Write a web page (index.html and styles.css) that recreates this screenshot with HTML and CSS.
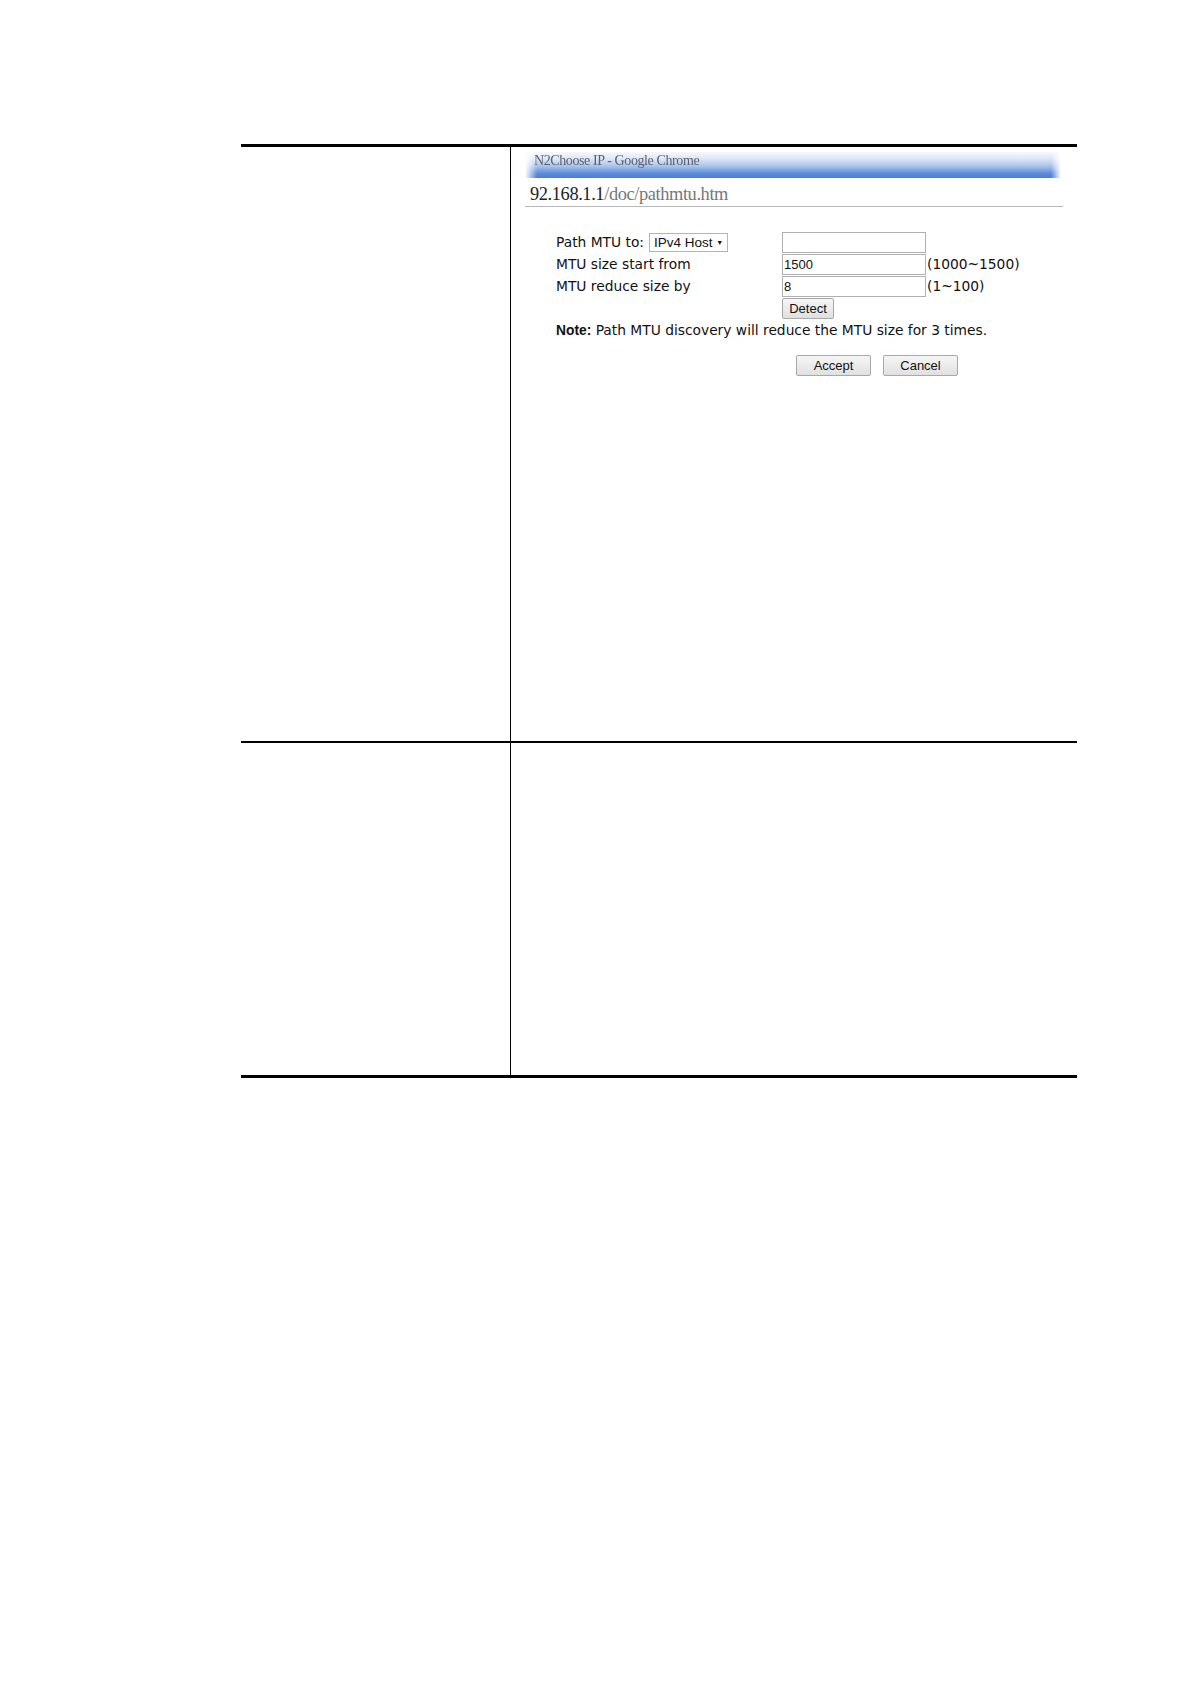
FILE: index.html
```html
<!DOCTYPE html>
<html>
<head>
<meta charset="utf-8">
<link rel="stylesheet" href="styles.css">
</head>
<body>
<div class="table">
  <div class="row row-top">
    <div class="cell-left"></div>
    <div class="cell-right">
      <div class="shot">
        <div class="titlebar"><span class="title">N2Choose IP - Google Chrome</span></div>
        <div class="urlbar"><div class="urltext"><span class="host">92.168.1.1</span><span class="path">/doc/pathmtu.htm</span></div></div>
        <div class="form">
          <div class="frow">
            <div class="flabel">Path MTU to: <span class="select">IPv4 Host <span class="arrow">&#9660;</span></span></div>
            <div class="input"></div>
          </div>
          <div class="frow">
            <div class="flabel">MTU size start from</div>
            <div class="input">1500</div>
            <div class="hint">(1000~1500)</div>
          </div>
          <div class="frow">
            <div class="flabel">MTU reduce size by</div>
            <div class="input">8</div>
            <div class="hint">(1~100)</div>
          </div>
          <div class="frow">
            <div class="flabel"></div>
            <div class="btn detect">Detect</div>
          </div>
          <div class="note"><b>Note:</b> Path MTU discovery will reduce the MTU size for 3 times.</div>
          <div class="actions">
            <div class="btn wide">Accept</div>
            <div class="btn wide">Cancel</div>
          </div>
        </div>
      </div>
    </div>
  </div>
  <div class="row row-bottom">
    <div class="cell-left"></div>
    <div class="cell-right"></div>
  </div>
</div>
</body>
</html>
```

FILE: styles.css
```css
html, body {
  margin: 0;
  padding: 0;
  background: #fff;
}
body {
  font-family: "DejaVu Sans", Tahoma, sans-serif;
  color: #111;
}
.table {
  margin-top: 144px;
  margin-left: 241px;
  width: 836px;
  border-top: 3px solid #000;
  border-bottom: 3px solid #000;
}
.row {
  display: flex;
}
.row-top {
  height: 594px;
  border-bottom: 2px solid #000;
}
.row-bottom {
  height: 332px;
}
.cell-left {
  width: 269px;
  flex: none;
}
.cell-right {
  flex: 1;
  border-left: 1px solid #000;
}
.shot {
  padding: 5px 0 0 14px;
}
.titlebar {
  width: 536px;
  height: 26px;
  overflow: hidden;
  background: linear-gradient(to bottom, #f5f8fd 0%, #dfe8f7 25%, #a8c2ec 55%, #5d8cdb 82%, #4b7dd4 100%);
  -webkit-mask-image: linear-gradient(to right, transparent 0, #000 12px, #000 calc(100% - 10px), transparent 100%);
  mask-image: linear-gradient(to right, transparent 0, #000 12px, #000 calc(100% - 10px), transparent 100%);
}
.title {
  display: block;
  padding: 2px 0 0 9px;
  font-family: "Liberation Serif", "DejaVu Serif", serif;
  font-size: 14px;
  line-height: 14px;
  color: #5a6070;
  letter-spacing: -0.4px;
  white-space: nowrap;
}
.urlbar {
  width: 538px;
  height: 28px;
  border-bottom: 1px solid #b8b8b8;
}
.urltext {
  margin-left: 5px;
  padding-top: 6px;
  white-space: nowrap;
  font-family: "Liberation Serif", "DejaVu Serif", serif;
  font-size: 18.4px;
  line-height: 20px;
  letter-spacing: -0.4px;
}
.host { color: #222; }
.path { color: #777; }
.form {
  padding: 24px 0 0 31px;
  font-size: 13.8px;
}
.frow {
  display: flex;
  align-items: center;
  height: 22px;
}
.flabel {
  width: 226px;
  flex: none;
  display: flex;
  align-items: center;
  gap: 5px;
  white-space: nowrap;
}
.select {
  display: inline-block;
  height: 17px;
  line-height: 17px;
  padding: 0 4px;
  border: 1px solid #b5b5b5;
  font-family: "Liberation Sans", Arial, sans-serif;
  font-size: 13.5px;
}
.arrow {
  font-size: 7px;
  vertical-align: 2px;
}
.input {
  width: 141px;
  height: 19px;
  line-height: 19px;
  border: 1px solid #b0b0b0;
  padding-left: 1px;
  font-family: "Liberation Sans", Arial, sans-serif;
  font-size: 13px;
  box-sizing: content-box;
}
.hint {
  padding-left: 1px;
}
.btn {
  height: 19px;
  line-height: 19px;
  border: 1px solid #a8a8a8;
  border-radius: 2px;
  background: linear-gradient(to bottom, #f6f6f6, #e0e0e0);
  text-align: center;
  font-family: "Liberation Sans", Arial, sans-serif;
  font-size: 13px;
  color: #111;
}
.detect {
  width: 50px;
}
.note {
  margin-top: 1px;
  height: 20px;
  line-height: 20px;
  white-space: nowrap;
}
.note b {
  font-family: "Liberation Sans", Arial, sans-serif;
  font-weight: bold;
}
.actions {
  display: flex;
  gap: 12px;
  margin-top: 15px;
  padding-left: 240px;
}
.wide {
  width: 73px;
}
```
